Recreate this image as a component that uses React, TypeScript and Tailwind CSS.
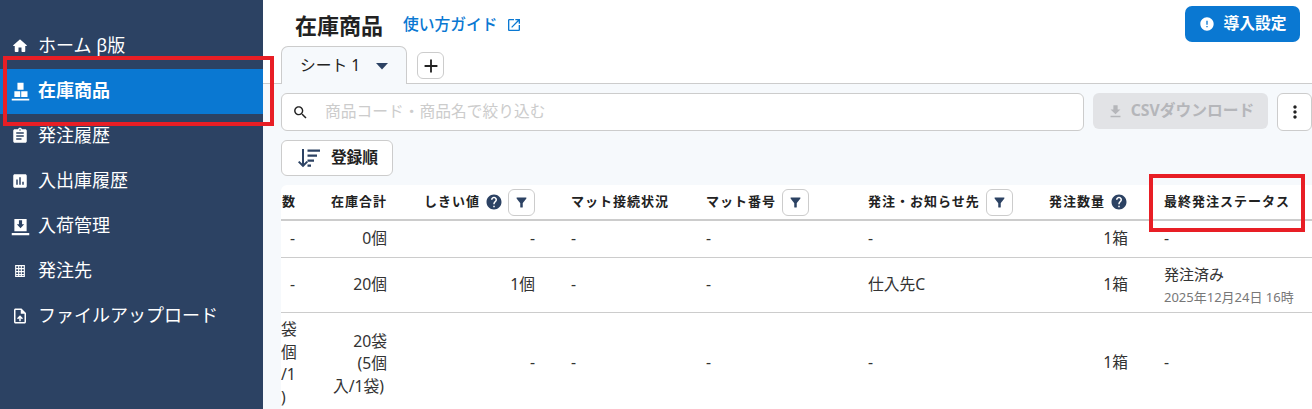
import type { ReactNode } from "react";

const P = {
  home: "M10 19v-5h4v5c0 .55.45 1 1 1h3c.55 0 1-.45 1-1v-7h1.7c.46 0 .68-.57.33-.87L12.67 3.6c-.38-.34-.96-.34-1.34 0l-8.36 7.53c-.34.3-.13.87.33.87H5v7c0 .55.45 1 1 1h3c.55 0 1-.45 1-1z",
  stock: "M8.500 3h7v8h-7zM5 12.800h6.700v6.700H5zM12.800 12.800H20v6.700h-7.200zM2 21.500h20v2H2z",
  order: "M19 3h-4.180C14.400 1.840 13.300 1 12 1c-1.300 0-2.400.84-2.820 2H5c-1.100 0-2 .9-2 2v14c0 1.100.9 2 2 2h14c1.100 0 2-.9 2-2V5c0-1.100-.9-2-2-2zm-7 0c.55 0 1 .45 1 1s-.45 1-1 1-1-.45-1-1 .45-1 1-1zm2 14H7v-2h7v2zm3-4H7v-2h10v2zm0-4H7V7h10v2z",
  chart: "M19 3H5c-1.100 0-2 .9-2 2v14c0 1.100.9 2 2 2h14c1.100 0 2-.9 2-2V5c0-1.100-.9-2-2-2zM9 17H7v-7h2v7zm4 0h-2V7h2v10zm4 0h-2v-4h2v4z",
  inbound: "M5 4.500h14v14H5zM10.200 6v4.500H7.800L12 15l4.200-4.500h-2.400V6zM2 20.500h20v2.500H2z",
  building: "M5.500 4h13v16h-13zM7 5.500V8h2.500V5.500zM11 5.500V8h2V5.500zM14.500 5.500V8H17V5.500zM7 9.500V12h2.500V9.500zM11 9.500V12h2V9.500zM14.500 9.500V12H17V9.500zM7 13.500V16h2.500v-2.500zM11 13.500V16h2v-2.500zM14.500 13.500V16H17v-2.500zM7 17.500v1h2.500v-1zM11 17.500v1h2v-1zM14.500 17.500v1H17v-1z",
  upload: "M14 2H6c-1.100 0-1.990.9-1.990 2L4 20c0 1.100.89 2 1.990 2H18c1.100 0 2-.9 2-2V8l-6-6zm4 18H6V4h7v5h5v11zM8 15.010l1.410 1.410L11 14.840V19h2v-4.160l1.590 1.590L16 15.010 12.010 11z",
  external: "M19 19H5V5h7V3H5c-1.110 0-2 .9-2 2v14c0 1.100.89 2 2 2h14c1.100 0 2-.9 2-2v-7h-2v7zM14 3v2h3.590l-9.830 9.830 1.410 1.410L19 6.410V10h2V3h-7z",
  alert: "M12 2C6.480 2 2 6.480 2 12s4.480 10 10 10 10-4.480 10-10S17.520 2 12 2zm1 15h-2v-2h2v2zm0-4h-2V7h2v6z",
  caret: "M6 9l6 6.500L18 9z",
  add: "M19 13h-6v6h-2v-6H5v-2h6V5h2v6h6v2z",
  search: "M15.500 14h-.79l-.28-.27C15.410 12.590 16 11.110 16 9.500 16 5.910 13.090 3 9.500 3S3 5.910 3 9.500 5.910 16 9.500 16c1.610 0 3.090-.59 4.230-1.570l.27.28v.79l5 4.990L20.490 19l-4.990-5zm-6 0C7.010 14 5 11.990 5 9.500S7.010 5 9.500 5 14 7.010 14 9.500 11.990 14 9.500 14z",
  download: "M19 9h-4V3H9v6H5l7 7 7-7zM5 18v2h14v-2H5z",
  more: "M12 8c1.100 0 2-.9 2-2s-.9-2-2-2-2 .9-2 2 .9 2 2 2zm0 2c-1.100 0-2 .9-2 2s.9 2 2 2 2-.9 2-2-.9-2-2-2zm0 6c-1.100 0-2 .9-2 2s.9 2 2 2 2-.9 2-2-.9-2-2-2z",
  sort: "M5 3h2v14.500l2.600-2.600L11 16.300 6 21.300l-5-5 1.400-1.400L5 17.500zM10.500 3.500H23v2.200H10.500zM10.500 8.500H20v2.200h-9.500zM10.500 13.500H17v2.200h-6.500zM10.500 18.500H14v2.200h-3.500z",
  filter: "M4.250 5.610C6.270 8.200 10 13 10 13v6c0 .55.45 1 1 1h2c.55 0 1-.45 1-1v-6s3.720-4.800 5.740-7.390c.51-.66.04-1.610-.79-1.610H5.040c-.83 0-1.300.95-.79 1.610z",
  help: "M12 2C6.480 2 2 6.480 2 12s4.480 10 10 10 10-4.480 10-10S17.520 2 12 2zm1 17h-2v-2h2v2zm2.070-7.750l-.9.92C13.450 12.900 13 13.500 13 15h-2v-.5c0-1.100.45-2.100 1.170-2.830l1.240-1.260c.37-.36.59-.86.59-1.410 0-1.100-.9-2-2-2s-2 .9-2 2H8c0-2.210 1.790-4 4-4s4 1.790 4 4c0 .88-.36 1.680-.93 2.250z",
};

function Icon({ d, className }: { d: string; className: string }) {
  return (
    <svg viewBox="0 0 24 24" fill="currentColor" fillRule="evenodd" className={className}>
      <path d={d} />
    </svg>
  );
}

const navItems = [
  { label: "ホーム β版", icon: P.home },
  { label: "在庫商品", icon: P.stock, active: true, wide: true },
  { label: "発注履歴", icon: P.order },
  { label: "入出庫履歴", icon: P.chart },
  { label: "入荷管理", icon: P.inbound, wide: true },
  { label: "発注先", icon: P.building },
  { label: "ファイルアップロード", icon: P.upload },
];

function FilterButton({ tight }: { tight?: boolean }) {
  return (
    <span
      className={`flex h-[27px] w-[27px] shrink-0 items-center justify-center rounded-[6px] border border-[#cccccc] bg-white text-[#2c4263] ${
        tight ? "ml-[5px]" : "ml-[6px]"
      }`}
    >
      <Icon d={P.filter} className="h-[15px] w-[15px]" />
    </span>
  );
}

function HelpIcon() {
  return <Icon d={P.help} className="ml-[5px] h-[18px] w-[18px] shrink-0 text-[#2c4263]" />;
}

function Th({ children, right }: { children: ReactNode; right?: boolean }) {
  return (
    <th className="border-b-2 border-[#cccccc] px-[18px] py-0 text-[13px] font-bold tracking-[1px] text-[#222222]">
      <div className={`flex h-[34px] items-center whitespace-nowrap ${right ? "justify-end" : "justify-start"}`}>
        {children}
      </div>
    </th>
  );
}

function Td({ children, right }: { children?: ReactNode; right?: boolean }) {
  return (
    <td className={`border-b border-[#cccccc] px-[18px] py-0 align-middle ${right ? "text-right" : "text-left"}`}>
      {children ?? "-"}
    </td>
  );
}

export default function App() {
  return (
    <div className="relative flex h-[409px] w-[1312px] overflow-hidden bg-white font-['Noto_Sans','Noto_Sans_CJK_JP',sans-serif] text-[#333333]">
      <aside className="w-[263px] shrink-0 bg-[#2c4263] pt-[24px] text-white">
        {navItems.map((item) => (
          <div
            key={item.label}
            className={`flex h-[45px] items-center pb-[2px] text-[18px] ${item.active ? "bg-[#0a78d2] font-bold" : ""} ${
              item.wide ? "pl-[9.500px]" : "pl-[11px]"
            }`}
          >
            <Icon
              d={item.icon}
              className={item.wide ? "mr-[7.500px] h-[21px] w-[21px] shrink-0" : "mr-[9px] h-[18px] w-[18px] shrink-0"}
            />
            {item.label}
          </div>
        ))}
      </aside>

      <main className="flex min-w-0 flex-1 flex-col">
        <header className="flex h-[46px] shrink-0 items-start justify-between pl-[32px] pr-[12px]">
          <div className="flex h-[50px] items-center">
            <h1 className="text-[22px] font-bold text-[#222222]">在庫商品</h1>
            <a className="ml-[20px] flex items-center text-[15.750px] font-medium text-[#0a78d2]">
              使い方ガイド
              <Icon d={P.external} className="ml-[8px] h-[16px] w-[16px]" />
            </a>
          </div>
          <button className="mt-[6px] flex h-[36px] w-[115px] items-center justify-center rounded-[7px] bg-[#0a78d2] text-[15.750px] font-bold text-white">
            <Icon d={P.alert} className="mr-[9px] h-[16px] w-[16px]" />
            導入設定
          </button>
        </header>

        <div className="flex h-[38px] shrink-0 border-b border-[#cccccc] pl-[18px]">
          <div className="relative z-10 flex h-[38px] w-[126px] items-center rounded-t-[7px] border border-b-0 border-[#cccccc] bg-[#f6f9fc] pl-[18px] text-[15.750px] text-[#222222]">
            シート 1
            <Icon d={P.caret} className="ml-[10px] h-[24px] w-[24px] text-[#2c4263]" />
          </div>
          <span className="ml-[10px] mt-[6px] flex h-[27px] w-[27px] items-center justify-center rounded-[6px] border border-[#cccccc] bg-white text-[#222222]">
            <Icon d={P.add} className="h-[22px] w-[22px]" />
          </span>
        </div>

        <section className="flex min-h-0 flex-1 flex-col bg-[#f6f9fc] pl-[18px] pt-[9px]">
          <div className="flex items-start">
            <div className="flex h-[38px] w-[803px] items-center rounded-[6px] border border-[#cccccc] bg-white pl-[10px]">
              <Icon d={P.search} className="h-[17px] w-[17px] text-[#222222]" />
              <span className="ml-[16px] text-[15.750px] text-[#cccccc]">商品コード・商品名で絞り込む</span>
            </div>
            <button className="ml-[9px] flex h-[36px] w-[175px] items-center justify-center rounded-[6px] bg-[#e2e3e6] text-[15.750px] font-bold text-[#b5b6ba]">
              <Icon d={P.download} className="mr-[7px] h-[17px] w-[17px]" />
              CSVダウンロード
            </button>
            <button className="ml-[9px] flex h-[38px] w-[35px] items-center justify-center rounded-[6px] border border-[#cccccc] bg-white text-[#222222]">
              <Icon d={P.more} className="h-[20px] w-[20px]" />
            </button>
          </div>

          <button className="mt-[9px] flex h-[36px] w-[112px] items-center justify-center rounded-[6px] border border-[#cccccc] bg-white pl-[1px] text-[15.750px] font-bold text-[#222222]">
            <Icon d={P.sort} className="mr-[10px] h-[24px] w-[24px] text-[#2c4263]" />
            登録順
          </button>

          <div className="mt-[9px] min-h-0 flex-1 overflow-hidden rounded-tl-[6px] bg-white">
            <table className="w-[1031px] table-fixed border-collapse text-[15.750px]">
              <colgroup>
                <col className="w-[32px]" />
                <col className="w-[92px]" />
                <col className="w-[148px]" />
                <col className="w-[135px]" />
                <col className="w-[162px]" />
                <col className="w-[181px]" />
                <col className="w-[115px]" />
                <col className="w-[166px]" />
              </colgroup>
              <thead>
                <tr>
                  <th className="border-b-2 border-[#cccccc] p-0 pr-[18px] text-right text-[13px] font-bold text-[#222222]">数</th>
                  <Th right>在庫合計</Th>
                  <Th right>しきい値<HelpIcon /><FilterButton tight /></Th>
                  <Th>マット接続状況</Th>
                  <Th>マット番号<FilterButton /></Th>
                  <Th>発注・お知らせ先<FilterButton /></Th>
                  <Th right>発注数量<HelpIcon /></Th>
                  <Th>最終発注ステータス</Th>
                </tr>
              </thead>
              <tbody>
                <tr className="h-[37px]">
                  <td className="border-b border-[#cccccc] pr-[18px] text-right">-</td>
                  <Td right>0個</Td>
                  <Td right />
                  <Td />
                  <Td />
                  <Td />
                  <Td right>1箱</Td>
                  <Td />
                </tr>
                <tr className="h-[55px]">
                  <td className="border-b border-[#cccccc] pr-[18px] text-right">-</td>
                  <Td right>20個</Td>
                  <Td right>1個</Td>
                  <Td />
                  <Td />
                  <Td>仕入先C</Td>
                  <Td right>1箱</Td>
                  <Td>
                    <div className="text-[15px] leading-[22px]">発注済み</div>
                    <div className="mt-[2px] text-[13px] leading-[20px] text-[#777777]">2025年12月24日 16時</div>
                  </Td>
                </tr>
                <tr className="h-[102px]">
                  <td className="pl-0 text-left leading-[22.500px]">
                    袋<br />個<br />/1<br />)
                  </td>
                  <td className="px-[18px] text-right leading-[22.500px]">
                    <span className="block whitespace-nowrap">20袋</span>
                    <span className="block whitespace-nowrap">(5個</span>
                    <span className="block whitespace-nowrap pr-[3px]">入/1袋)</span>
                  </td>
                  <td className="px-[18px] text-right">-</td>
                  <td className="px-[18px]">-</td>
                  <td className="px-[18px]">-</td>
                  <td className="px-[18px]">-</td>
                  <td className="px-[18px] text-right">1箱</td>
                  <td className="px-[18px]">-</td>
                </tr>
              </tbody>
            </table>
          </div>
        </section>
      </main>

      <div className="pointer-events-none absolute left-[3px] top-[56px] h-[70px] w-[271px] border-[4px] border-[#e81e25]" />
      <div className="pointer-events-none absolute left-[1149px] top-[174px] h-[58px] w-[156px] border-[4px] border-[#e81e25]" />
    </div>
  );
}
